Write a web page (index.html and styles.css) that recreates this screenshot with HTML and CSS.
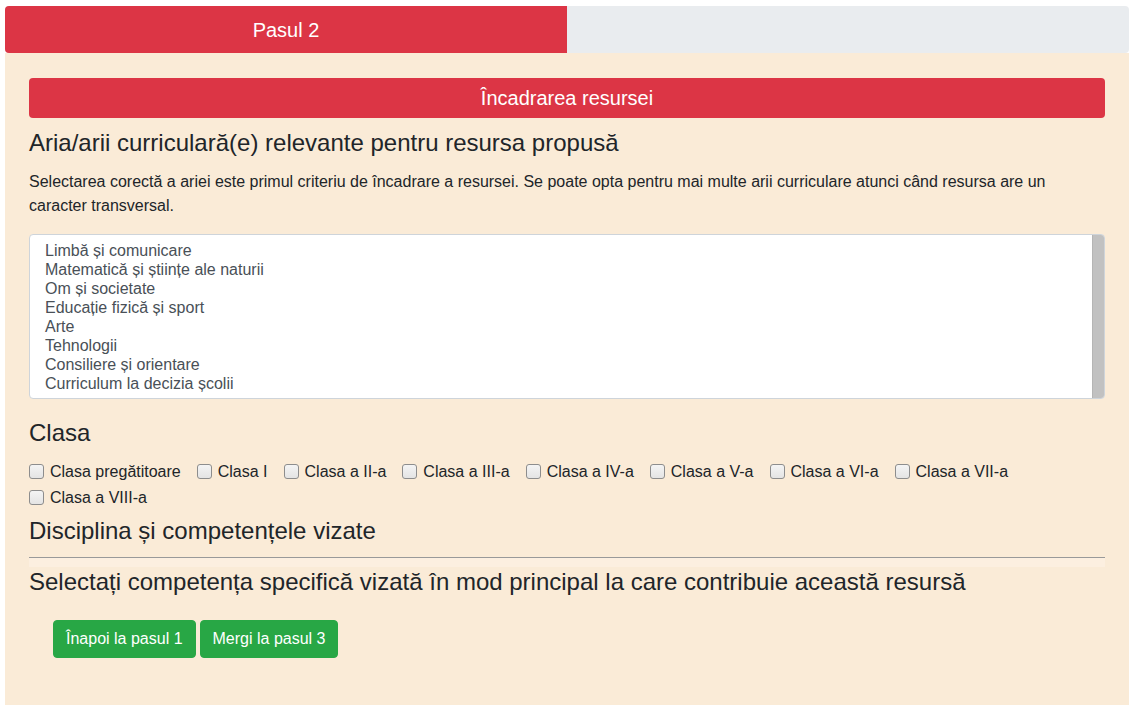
FILE: index.html
```html
<!DOCTYPE html>
<html lang="ro">
<head>
<meta charset="utf-8">
<title>Pasul 2</title>
<link rel="stylesheet" href="styles.css">
</head>
<body>
<div class="page">
  <div class="progress">
    <div class="progress-bar" style="width: 50%">Pasul 2</div>
  </div>
  <div class="panel">
    <div class="section-title">Încadrarea resursei</div>
    <h4 class="h-aria">Aria/arii curriculară(e) relevante pentru resursa propusă</h4>
    <p class="intro">Selectarea corectă a ariei este primul criteriu de încadrare a resursei. Se poate opta pentru mai multe arii curriculare atunci când resursa are un caracter transversal.</p>
    <div class="listbox">
      <ul class="options">
        <li>Limbă și comunicare</li>
        <li>Matematică și științe ale naturii</li>
        <li>Om și societate</li>
        <li>Educație fizică și sport</li>
        <li>Arte</li>
        <li>Tehnologii</li>
        <li>Consiliere și orientare</li>
        <li>Curriculum la decizia școlii</li>
      </ul>
      <div class="scrollbar"></div>
    </div>
    <h4 class="h-clasa">Clasa</h4>
    <div class="checks">
      <label class="check"><input type="checkbox"><span>Clasa pregătitoare</span></label>
      <label class="check"><input type="checkbox"><span>Clasa I</span></label>
      <label class="check"><input type="checkbox"><span>Clasa a II-a</span></label>
      <label class="check"><input type="checkbox"><span>Clasa a III-a</span></label>
      <label class="check"><input type="checkbox"><span>Clasa a IV-a</span></label>
      <label class="check"><input type="checkbox"><span>Clasa a V-a</span></label>
      <label class="check"><input type="checkbox"><span>Clasa a VI-a</span></label>
      <label class="check"><input type="checkbox"><span>Clasa a VII-a</span></label>
      <label class="check"><input type="checkbox"><span>Clasa a VIII-a</span></label>
    </div>
    <h4 class="h-disc">Disciplina și competențele vizate</h4>
    <hr class="divider">
    <div class="divider-band"></div>
    <h4 class="h-sel">Selectați competența specifică vizată în mod principal la care contribuie această resursă</h4>
    <div class="actions">
      <button class="btn">Înapoi la pasul 1</button>
      <button class="btn">Mergi la pasul 3</button>
    </div>
  </div>
</div>
</body>
</html>
```

FILE: styles.css
```css
* { box-sizing: border-box; }

html, body {
  margin: 0;
  padding: 0;
  background: #ffffff;
}

body {
  font-family: "Liberation Sans", Arial, sans-serif;
  color: #212529;
  font-size: 16px;
  line-height: 1.5;
}

.page {
  padding: 6px 6px 6px 5px;
}

.progress {
  display: flex;
  height: 47px;
  background: #e9ecef;
  border-radius: 4px;
  overflow: hidden;
}

.progress-bar {
  display: flex;
  align-items: center;
  justify-content: center;
  background: #dc3545;
  color: #ffffff;
  font-size: 20px;
}

.panel {
  background: #faebd7;
  padding: 25px 24px 47px 24px;
}

.section-title {
  background: #dc3545;
  color: #ffffff;
  font-size: 20px;
  line-height: 40px;
  height: 40px;
  text-align: center;
  border-radius: 4px;
}

h4 {
  font-size: 24px;
  font-weight: 400;
  line-height: 1.2;
  margin: 0;
}

.h-aria {
  margin-top: 11px;
}

.intro {
  margin: 12px 0 16px;
  font-size: 16px;
  line-height: 24px;
}

.listbox {
  display: flex;
  height: 165px;
  background: #ffffff;
  border: 1px solid #ced4da;
  border-radius: 4px;
  overflow: hidden;
}

.options {
  flex: 1;
  list-style: none;
  margin: 0;
  padding: 6px 0 6px 15px;
  color: #495057;
  font-size: 16px;
  line-height: 19px;
}

.scrollbar {
  width: 12px;
  background: #c1c1c1;
  border-left: 1px solid #b5b5b5;
}

.h-clasa {
  margin-top: 20px;
}

.checks {
  display: flex;
  flex-wrap: wrap;
  margin-top: 11px;
  line-height: 26px;
}

.check {
  display: flex;
  align-items: center;
  margin-right: 16px;
  font-size: 16px;
}

.check input {
  -webkit-appearance: none;
  appearance: none;
  width: 15px;
  height: 15px;
  margin: 0 6px 0 0;
  border: 1px solid #8d8d8d;
  border-radius: 3px;
  background: linear-gradient(#f4f4f4, #e4e4e4);
}

.h-disc {
  margin-top: 6px;
}

.divider {
  margin: 12px 0 0;
  border: 0;
  border-top: 1px solid #999999;
  height: 0;
}

.divider-band {
  height: 9px;
  background: #fcefe0;
}

.h-sel {
  margin-top: 1px;
}

.actions {
  display: flex;
  gap: 4px;
  margin: 23px 0 0 24px;
}

.btn {
  font-family: "Liberation Sans", Arial, sans-serif;
  font-size: 16px;
  line-height: 24px;
  padding: 6px 12px;
  color: #ffffff;
  background: #28a745;
  border: 1px solid #28a745;
  border-radius: 4px;
}
```
